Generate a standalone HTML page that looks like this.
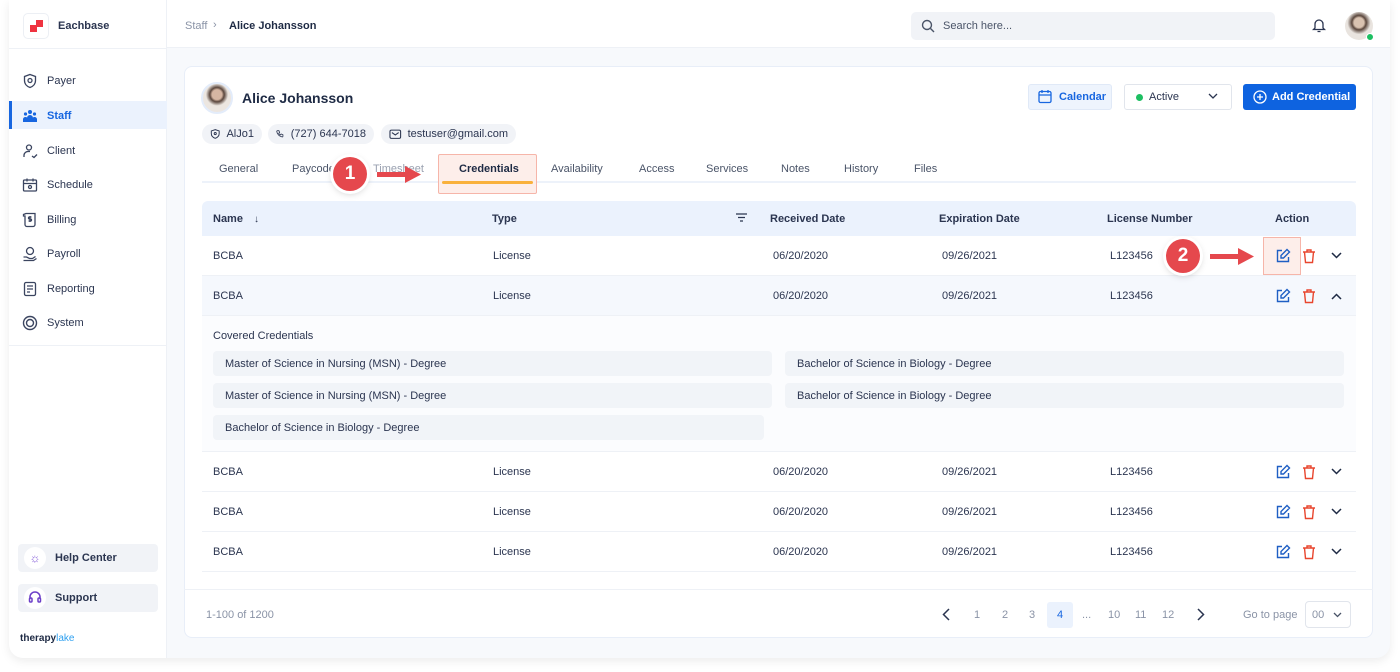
<!DOCTYPE html>
<html><head><meta charset="utf-8"><style>
*{box-sizing:border-box;margin:0;padding:0}
body{width:1400px;height:672px;background:#fff;font-family:"Liberation Sans",sans-serif;color:#1e2a44;position:relative;overflow:hidden;font-size:11px}
div{white-space:nowrap}
.abs{position:absolute}
.frame{position:absolute;left:9px;top:0;width:1381px;height:658px;border-radius:0 0 14px 14px;box-shadow:0 3px 10px rgba(0,0,0,.08);background:#f7f9fc;overflow:hidden}
.side{position:absolute;left:0;top:0;width:158px;height:658px;background:#fff;border-right:1px solid #eef1f6}
.nav{position:absolute;left:0;width:158px;height:28px;display:flex;align-items:center;padding-left:13px;gap:9px;font-size:11px;color:#2b3550}
.nav svg{width:16px;height:16px}
.hdr{position:absolute;left:158px;top:0;right:0;height:48px;background:#fff;border-bottom:1px solid #eef1f6}
.card{position:absolute;left:184px;top:66px;width:1189px;height:572px;background:#fff;border-radius:8px;border:1px solid #e8eef8}
.chip{position:absolute;top:124px;height:20px;border-radius:10px;background:#f1f3f7;display:flex;align-items:center;gap:6px;padding:0 8px;font-size:11px;color:#2b3550}
.tab{position:absolute;top:163px;font-size:11px;color:#4a5468}
.row{position:absolute;left:202px;width:1154px;height:40px;border-bottom:1px solid #eef1f6;font-size:11px;color:#2b3550}
.row span{position:absolute;top:14px}
.th{position:absolute;top:213px;font-size:11px;font-weight:bold;color:#2b3550}
.pill{position:absolute;height:25px;background:#f1f4f8;border-radius:4px;font-size:11px;color:#2b3550;padding:7px 12px}
.pg{position:absolute;top:609px;font-size:11px;color:#8a93a6}
.bad{position:absolute;width:34px;height:34px;border-radius:50%;background:#e5484d;color:#fff;font-weight:bold;font-size:19px;text-align:center;line-height:34px;box-shadow:0 0 0 3px #fff,0 2px 8px rgba(0,0,0,.25)}
</style></head><body>
<div class="frame">
 <div class="side">
  <div class="abs" style="left:14px;top:13px;width:26px;height:26px;border:1px solid #eceff4;border-radius:5px;background:#fff">
   <div class="abs" style="left:6px;top:11px;width:7px;height:7px;background:#ef3340"></div>
   <div class="abs" style="left:12px;top:6px;width:7px;height:7px;background:#ef3340"></div>
  </div>
  <div class="abs" style="left:49px;top:20px;font-size:11px;font-weight:bold;color:#2b3550">Eachbase</div>
  <div class="abs" style="left:0;top:48px;width:158px;border-top:1px solid #eef1f6"></div>
  <div class="nav" style="top:67px"><svg viewBox="0 0 16 16" fill="none" stroke="#3b4560" stroke-width="1.3"><path d="M8 1.5l5.5 2v4c0 3.5-2.5 6-5.5 7-3-1-5.5-3.5-5.5-7v-4z"/><circle cx="8" cy="7.5" r="2"/></svg>Payer</div>
  <div class="abs" style="left:0;top:101px;width:158px;height:28px;background:#ebf2fd"></div>
  <div class="abs" style="left:0;top:101px;width:3px;height:28px;background:#1766e0"></div>
  <div class="nav" style="top:102px;color:#1766e0;font-weight:bold"><svg viewBox="0 0 16 16" fill="#1766e0"><circle cx="8" cy="4" r="2"/><circle cx="3.5" cy="6" r="1.6"/><circle cx="12.5" cy="6" r="1.6"/><path d="M5 14v-4a3 3 0 016 0v4zM1 14v-3a2.5 2.5 0 014 -1.5V14zM15 14v-3a2.5 2.5 0 00-4-1.5V14z"/></svg>Staff</div>
  <div class="nav" style="top:137px"><svg viewBox="0 0 16 16" fill="none" stroke="#3b4560" stroke-width="1.3"><circle cx="7" cy="4.5" r="2.5"/><path d="M2 14v-2a4 4 0 014-3.5h2M10 13l2 1.5 3-3"/></svg>Client</div>
  <div class="nav" style="top:171px"><svg viewBox="0 0 16 16" fill="none" stroke="#3b4560" stroke-width="1.3"><rect x="1.5" y="3" width="13" height="11" rx="1"/><path d="M1.5 6.5h13M5 1.5v3M11 1.5v3"/><circle cx="8" cy="10" r="1.5"/></svg>Schedule</div>
  <div class="nav" style="top:206px"><svg viewBox="0 0 16 16" fill="none" stroke="#3b4560" stroke-width="1.3"><path d="M4 1.5h9v11a2 2 0 01-2 2H5a2 2 0 01-2-2V4H1.5V2.5z"/><path d="M9.5 5H7.5a1 1 0 000 2h1a1 1 0 010 2H6.5M8 4v6"/></svg>Billing</div>
  <div class="nav" style="top:240px"><svg viewBox="0 0 16 16" fill="none" stroke="#3b4560" stroke-width="1.3"><circle cx="8" cy="5" r="3.5"/><path d="M1.5 11h3l3 1.5h3l3-2M1.5 14.5h10l3-2"/></svg>Payroll</div>
  <div class="nav" style="top:275px"><svg viewBox="0 0 16 16" fill="none" stroke="#3b4560" stroke-width="1.3"><rect x="2.5" y="1.5" width="11" height="13" rx="1.5"/><path d="M5 5h6M5 8h6M5 11h3"/></svg>Reporting</div>
  <div class="nav" style="top:309px"><svg viewBox="0 0 16 16" fill="none" stroke="#3b4560" stroke-width="1.4"><circle cx="8" cy="8" r="6.5"/><circle cx="8" cy="8" r="3.5"/></svg>System</div>
  <div class="abs" style="left:0;top:345px;width:158px;border-top:1px solid #eef1f6"></div>
  <div class="abs" style="left:9px;top:544px;width:140px;height:28px;background:#f1f3f7;border-radius:4px"></div>
  <div class="abs" style="left:15px;top:547px;width:22px;height:22px;border-radius:50%;background:#fff;text-align:center;line-height:22px;color:#7b4fd6;font-size:12px">☼</div>
  <div class="abs" style="left:46px;top:552px;font-size:11px;font-weight:bold;color:#2b3550">Help Center</div>
  <div class="abs" style="left:9px;top:584px;width:140px;height:28px;background:#f1f3f7;border-radius:4px"></div>
  <div class="abs" style="left:15px;top:587px;width:22px;height:22px;border-radius:50%;background:#fff"><svg class="abs" style="left:4px;top:4px" width="14" height="14" viewBox="0 0 14 14" fill="none" stroke="#6b3fc8" stroke-width="1.5"><path d="M2 8V6a5 5 0 0110 0v2"/><rect x="1.5" y="7" width="2.5" height="4" rx="1"/><rect x="10" y="7" width="2.5" height="4" rx="1"/></svg></div>
  <div class="abs" style="left:46px;top:592px;font-size:11px;font-weight:bold;color:#2b3550">Support</div>
  <div class="abs" style="left:11px;top:633px;font-size:10px;font-weight:bold;color:#1e2a44">therapy<span style="color:#2ea0f0;font-weight:normal">lake</span></div>
 </div>
 <div class="hdr">
  <div class="abs" style="left:18px;top:20px;font-size:11px;color:#8a93a6">Staff</div>
  <div class="abs" style="left:46px;top:19px;font-size:11px;color:#8a93a6">›</div>
  <div class="abs" style="left:62px;top:20px;font-size:11px;font-weight:bold;color:#1e2a44">Alice Johansson</div>
  <div class="abs" style="left:744px;top:12px;width:364px;height:28px;background:#f1f3f7;border-radius:5px">
   <svg class="abs" style="left:10px;top:7px" width="14" height="14" viewBox="0 0 14 14" fill="none" stroke="#4a5468" stroke-width="1.4"><circle cx="6" cy="6" r="4.5"/><path d="M9.5 9.5L13 13"/></svg>
   <div class="abs" style="left:32px;top:8px;font-size:11px;color:#4a5468">Search here...</div>
  </div>
  <svg class="abs" style="left:1145px;top:18px" width="14" height="15" viewBox="0 0 14 15" fill="none" stroke="#2b3550" stroke-width="1.3"><path d="M3 10V6a4 4 0 018 0v4l1.5 1.5h-11zM5.5 13.5h3"/></svg>
  <div class="abs" style="left:1178px;top:12px;width:28px;height:28px;border-radius:50%;background:radial-gradient(circle at 50% 38%,#d9c2b0 22%,#5a463c 32%,#e9e4df 52%)"></div>
  <div class="abs" style="left:1199px;top:33px;width:8px;height:8px;border-radius:50%;background:#1dbf62;border:1px solid #fff"></div>
 </div>
</div>
<div class="card"></div>
<div class="abs" style="left:201px;top:82px;width:32px;height:32px;border-radius:50%;background:radial-gradient(circle at 50% 38%,#d6b6a2 22%,#5a463c 32%,#ece6e0 50%);border:2px solid #e3ecfa"></div>
<div class="abs" style="left:242px;top:90px;font-size:14px;font-weight:bold;color:#1e2a44">Alice Johansson</div>
<div class="chip" style="left:202px;width:60px"><svg width="12" height="12" viewBox="0 0 12 12" fill="none" stroke="#2b3550" stroke-width="1.1"><path d="M6 1l4.5 1.5v3c0 2.8-2 4.5-4.5 5.5C3.5 10 1.5 8.3 1.5 5.5v-3z"/><circle cx="6" cy="5.5" r="1.2"/></svg>AlJo1</div>
<div class="chip" style="left:268px;width:106px"><svg width="12" height="12" viewBox="0 0 12 12" fill="none" stroke="#2b3550" stroke-width="1.1"><path d="M2 1.5h2l1 2.5-1.3 1a6 6 0 002.3 2.3l1-1.3 2.5 1v2a1 1 0 01-1 1A9 9 0 011 2.5a1 1 0 011-1z"/></svg>(727) 644-7018</div>
<div class="chip" style="left:381px;width:135px"><svg width="13" height="12" viewBox="0 0 13 12" fill="none" stroke="#2b3550" stroke-width="1.1"><rect x="1" y="2" width="11" height="8.5" rx="1.5"/><path d="M3 4.5l3.5 2.5 3.5-2.5"/></svg>testuser@gmail.com</div>
<div class="abs" style="left:1028px;top:84px;width:84px;height:26px;background:#eef4fd;border:1px solid #e0e9f7;border-radius:3px;font-size:11px;font-weight:bold;color:#1766e0;padding:6px 0 0 30px">Calendar</div>
<svg class="abs" style="left:1038px;top:89px" width="14" height="15" viewBox="0 0 14 15" fill="none" stroke="#1766e0" stroke-width="1.3"><rect x="1" y="2.5" width="12" height="11" rx="1.5"/><path d="M1 6h12M4 1v3M10 1v3"/></svg>
<div class="abs" style="left:1124px;top:84px;width:108px;height:26px;background:#fff;border:1px solid #e1e5ec;border-radius:3px;font-size:11px;color:#2b3550;padding:6px 0 0 24px">Active</div>
<div class="abs" style="left:1136px;top:94px;width:7px;height:7px;border-radius:50%;background:#1dbf62"></div>
<svg class="abs" style="left:1208px;top:93px" width="10" height="7" viewBox="0 0 10 7" fill="none" stroke="#2b3550" stroke-width="1.3"><path d="M1 1l4 4 4-4"/></svg>
<div class="abs" style="left:1243px;top:84px;width:113px;height:26px;background:#0e63e0;border-radius:3px;font-size:11px;font-weight:bold;color:#fff;padding:7px 0 0 29px">Add Credential</div>
<svg class="abs" style="left:1253px;top:90px" width="14" height="14" viewBox="0 0 14 14" fill="none" stroke="#fff" stroke-width="1.3"><circle cx="7" cy="7" r="6"/><path d="M7 4v6M4 7h6"/></svg>

<div class="tab" style="left:219px">General</div>
<div class="tab" style="left:292px">Paycode</div>
<div class="tab" style="left:373px;color:#9aa1b0">Timesheet</div>
<div class="tab" style="left:551px">Availability</div>
<div class="tab" style="left:639px">Access</div>
<div class="tab" style="left:706px">Services</div>
<div class="tab" style="left:781px">Notes</div>
<div class="tab" style="left:844px">History</div>
<div class="tab" style="left:914px">Files</div>
<div class="abs" style="left:202px;top:181px;width:1154px;height:2px;background:#edf2fa"></div>
<div class="abs" style="left:438px;top:154px;width:99px;height:40px;background:#fdeeea;border:1px solid #f6b5a9;border-radius:2px"></div>
<div class="tab" style="left:459px;font-weight:bold;color:#1e2a44">Credentials</div>
<div class="abs" style="left:442px;top:181px;width:91px;height:3px;background:#f9b13c;border-radius:2px"></div>

<div class="abs" style="left:202px;top:201px;width:1154px;height:35px;background:#ebf2fd;border-radius:6px 6px 0 0"></div>
<div class="th" style="left:213px">Name <span style="font-weight:normal;margin-left:8px;font-size:10px">↓</span></div>
<div class="th" style="left:492px">Type</div>
<svg class="abs" style="left:736px;top:213px" width="11" height="9" viewBox="0 0 11 9" stroke="#2b3550" stroke-width="1.2"><path d="M0 1h11M2 4.5h7M4 8h3"/></svg>
<div class="th" style="left:770px">Received Date</div>
<div class="th" style="left:939px">Expiration Date</div>
<div class="th" style="left:1107px">License Number</div>
<div class="th" style="left:1275px">Action</div>

<div class="row" style="top:236px;background:#fff"><span style="left:11px">BCBA</span><span style="left:291px">License</span><span style="left:571px">06/20/2020</span><span style="left:740px">09/26/2021</span><span style="left:908px">L123456</span></div>
<div class="row" style="top:276px;background:#f5f8fd"><span style="left:11px">BCBA</span><span style="left:291px">License</span><span style="left:571px">06/20/2020</span><span style="left:740px">09/26/2021</span><span style="left:908px">L123456</span></div>
<div class="abs" style="left:202px;top:316px;width:1154px;height:136px;background:#fbfcfe;border-bottom:1px solid #eef1f6"></div>
<div class="abs" style="left:213px;top:330px;font-size:11px;color:#2b3550">Covered Credentials</div>
<div class="pill" style="left:213px;top:351px;width:559px">Master of Science in Nursing (MSN) - Degree</div>
<div class="pill" style="left:785px;top:351px;width:559px">Bachelor of Science in Biology - Degree</div>
<div class="pill" style="left:213px;top:383px;width:559px">Master of Science in Nursing (MSN) - Degree</div>
<div class="pill" style="left:785px;top:383px;width:559px">Bachelor of Science in Biology - Degree</div>
<div class="pill" style="left:213px;top:415px;width:551px">Bachelor of Science in Biology - Degree</div>
<div class="row" style="top:452px;background:#fff"><span style="left:11px">BCBA</span><span style="left:291px">License</span><span style="left:571px">06/20/2020</span><span style="left:740px">09/26/2021</span><span style="left:908px">L123456</span></div>
<div class="row" style="top:492px;background:#fff"><span style="left:11px">BCBA</span><span style="left:291px">License</span><span style="left:571px">06/20/2020</span><span style="left:740px">09/26/2021</span><span style="left:908px">L123456</span></div>
<div class="row" style="top:532px;background:#fff"><span style="left:11px">BCBA</span><span style="left:291px">License</span><span style="left:571px">06/20/2020</span><span style="left:740px">09/26/2021</span><span style="left:908px">L123456</span></div>
<div class="abs" style="left:184px;top:589px;width:1189px;height:1px;background:#eef1f6"></div>

<div class="abs" style="left:1263px;top:237px;width:38px;height:38px;background:#fdeeea;border:1px solid #f6b5a9"></div>
<svg width="0" height="0" style="position:absolute"><defs>
<g id="ed" fill="none" stroke="#1f5fc4" stroke-width="1.4"><path d="M7 2.5H2.5v11h11V9"/><path d="M12 1.5l2.5 2.5-6 6H6V7.5z"/></g>
<g id="dl" fill="none" stroke="#e8462e" stroke-width="1.4"><path d="M2 4h12M6 4V2h4v2M3.5 4l1 10.5h7L12.5 4"/></g>
</defs></svg>
<svg class="abs" style="left:1275px;top:248px" width="16" height="16"><use href="#ed"/></svg><svg class="abs" style="left:1301px;top:248px" width="16" height="16"><use href="#dl"/></svg><svg class="abs" style="left:1331px;top:252px" width="11" height="7" fill="none" stroke="#1e2a44" stroke-width="1.5"><path d="M1 1l4.5 4.5L10 1"/></svg>
<svg class="abs" style="left:1275px;top:288px" width="16" height="16"><use href="#ed"/></svg><svg class="abs" style="left:1301px;top:288px" width="16" height="16"><use href="#dl"/></svg><svg class="abs" style="left:1331px;top:293px" width="11" height="7" fill="none" stroke="#1e2a44" stroke-width="1.5"><path d="M1 6l4.5-4.5L10 6"/></svg>
<svg class="abs" style="left:1275px;top:464px" width="16" height="16"><use href="#ed"/></svg><svg class="abs" style="left:1301px;top:464px" width="16" height="16"><use href="#dl"/></svg><svg class="abs" style="left:1331px;top:468px" width="11" height="7" fill="none" stroke="#1e2a44" stroke-width="1.5"><path d="M1 1l4.5 4.5L10 1"/></svg>
<svg class="abs" style="left:1275px;top:504px" width="16" height="16"><use href="#ed"/></svg><svg class="abs" style="left:1301px;top:504px" width="16" height="16"><use href="#dl"/></svg><svg class="abs" style="left:1331px;top:508px" width="11" height="7" fill="none" stroke="#1e2a44" stroke-width="1.5"><path d="M1 1l4.5 4.5L10 1"/></svg>
<svg class="abs" style="left:1275px;top:544px" width="16" height="16"><use href="#ed"/></svg><svg class="abs" style="left:1301px;top:544px" width="16" height="16"><use href="#dl"/></svg><svg class="abs" style="left:1331px;top:548px" width="11" height="7" fill="none" stroke="#1e2a44" stroke-width="1.5"><path d="M1 1l4.5 4.5L10 1"/></svg>

<div class="pg" style="left:206px">1-100 of 1200</div>
<svg class="abs" style="left:942px;top:608px" width="8" height="13" fill="none" stroke="#2b3550" stroke-width="1.5"><path d="M7 1L1.5 6.5 7 12"/></svg>
<div class="pg" style="left:974px">1</div><div class="pg" style="left:1002px">2</div><div class="pg" style="left:1029px">3</div>
<div class="abs" style="left:1047px;top:602px;width:26px;height:26px;background:#ebf2fd;border-radius:3px;color:#1766e0;font-size:11px;text-align:center;line-height:26px">4</div>
<div class="pg" style="left:1082px">...</div><div class="pg" style="left:1108px">10</div><div class="pg" style="left:1135px">11</div><div class="pg" style="left:1162px">12</div>
<svg class="abs" style="left:1197px;top:608px" width="8" height="13" fill="none" stroke="#2b3550" stroke-width="1.5"><path d="M1 1l5.5 5.5L1 12"/></svg>
<div class="pg" style="left:1243px">Go to page</div>
<div class="abs" style="left:1305px;top:601px;width:46px;height:27px;border:1px solid #e1e5ec;border-radius:4px;font-size:11px;color:#8a93a6;padding:7px 0 0 6px">00</div>
<svg class="abs" style="left:1333px;top:612px" width="9" height="6" fill="none" stroke="#4a5468" stroke-width="1.3"><path d="M1 1l3.5 3.5L8 1"/></svg>

<div class="bad" style="left:333px;top:157px">1</div>
<svg class="abs" style="left:376px;top:165px" width="46" height="20"><rect x="1" y="7" width="30" height="5" fill="#e5484d"/><path d="M29 1l16 8.5-16 8.5z" fill="#e5484d"/></svg>
<div class="bad" style="left:1166px;top:239px">2</div>
<svg class="abs" style="left:1209px;top:247px" width="46" height="20"><rect x="1" y="7" width="30" height="5" fill="#e5484d"/><path d="M29 1l16 8.5-16 8.5z" fill="#e5484d"/></svg>
</body></html>
